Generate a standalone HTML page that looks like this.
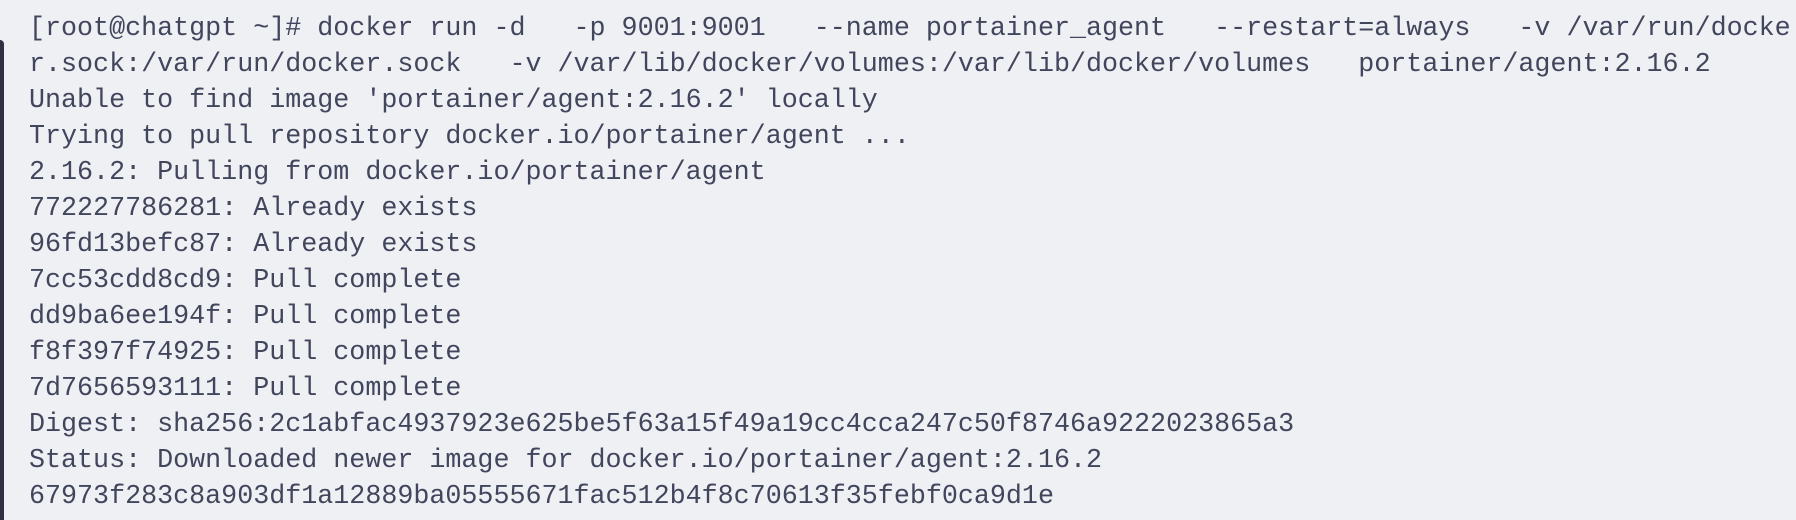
<!DOCTYPE html>
<html><head><meta charset="utf-8"><style>
html,body{margin:0;padding:0;width:1796px;height:516px;overflow:hidden;background:#eff0f4;}
.bar{position:absolute;left:0;top:40px;width:4px;height:480px;background:#2f3140;border-top-right-radius:4px;}
pre{position:absolute;left:29px;top:-25.5px;margin:0;font-family:"Liberation Mono",monospace;font-size:26.7px;line-height:36.05px;color:#42465c;white-space:pre;}
</style></head><body>
<div class="bar"></div>
<pre>docker/var/run/docker.sock --name --restart /var/lib
[root@chatgpt ~]# docker run -d   -p 9001:9001   --name portainer_agent   --restart=always   -v /var/run/docke
r.sock:/var/run/docker.sock   -v /var/lib/docker/volumes:/var/lib/docker/volumes   portainer/agent:2.16.2
Unable to find image 'portainer/agent:2.16.2' locally
Trying to pull repository docker.io/portainer/agent ...
2.16.2: Pulling from docker.io/portainer/agent
772227786281: Already exists
96fd13befc87: Already exists
7cc53cdd8cd9: Pull complete
dd9ba6ee194f: Pull complete
f8f397f74925: Pull complete
7d7656593111: Pull complete
Digest: sha256:2c1abfac4937923e625be5f63a15f49a19cc4cca247c50f8746a9222023865a3
Status: Downloaded newer image for docker.io/portainer/agent:2.16.2
67973f283c8a903df1a12889ba05555671fac512b4f8c70613f35febf0ca9d1e</pre>
</body></html>
